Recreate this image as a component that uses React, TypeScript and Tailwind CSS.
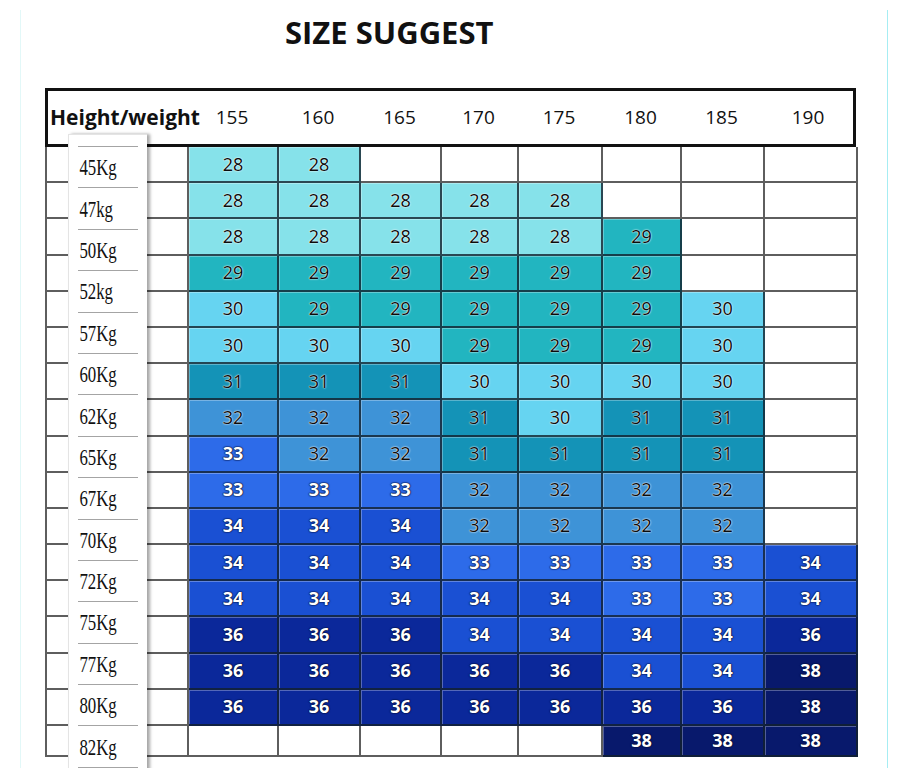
const heights = ["155", "160", "165", "170", "175", "180", "185", "190"];

const weights = ["45Kg", "47kg", "50Kg", "52kg", "57Kg", "60Kg", "62Kg", "65Kg", "67Kg", "70Kg", "72Kg", "75Kg", "77Kg", "80Kg", "82Kg"];

type Size = number | null;

const rows: Size[][] = [
  [28, 28, null, null, null, null, null, null],
  [28, 28, 28, 28, 28, null, null, null],
  [28, 28, 28, 28, 28, 29, null, null],
  [29, 29, 29, 29, 29, 29, null, null],
  [30, 29, 29, 29, 29, 29, 30, null],
  [30, 30, 30, 29, 29, 29, 30, null],
  [31, 31, 31, 30, 30, 30, 30, null],
  [32, 32, 32, 31, 30, 31, 31, null],
  [33, 32, 32, 31, 31, 31, 31, null],
  [33, 33, 33, 32, 32, 32, 32, null],
  [34, 34, 34, 32, 32, 32, 32, null],
  [34, 34, 34, 33, 33, 33, 33, 34],
  [34, 34, 34, 34, 34, 33, 33, 34],
  [36, 36, 36, 34, 34, 34, 34, 36],
  [36, 36, 36, 36, 36, 34, 34, 38],
  [36, 36, 36, 36, 36, 36, 36, 38],
  [null, null, null, null, null, 38, 38, 38],
];

// per size: background + whether text is light
const swatch: Record<number, { bg: string; light: boolean }> = {
  28: { bg: "bg-[#86e2ea]", light: false },
  29: { bg: "bg-[#22b5c0]", light: false },
  30: { bg: "bg-[#66d4f1]", light: false },
  31: { bg: "bg-[#1493b7]", light: false },
  32: { bg: "bg-[#3e93d7]", light: false },
  33: { bg: "bg-[#2d6be9]", light: true },
  34: { bg: "bg-[#1a50d3]", light: true },
  36: { bg: "bg-[#0b289a]", light: true },
  38: { bg: "bg-[#08196c]", light: true },
};

const SizeCell = ({ size }: { size: Size }) => {
  if (size === null) {
    return <div className="border-r-2 border-b-2 border-[#5e5e5e] bg-white" />;
  }
  const s = swatch[size];
  return (
    <div
      className={`flex items-center justify-center border-r-2 border-b-2 border-[#13202c]/80 ${s.bg} shadow-[inset_1px_1px_0_rgba(255,255,255,0.3)]`}
    >
      {s.light ? (
        <span className="text-[18px] font-bold text-white [text-shadow:0_0_2px_#00104a,0_0_1px_#000,0_0_1px_#000]">{size}</span>
      ) : (
        <span className="text-[18px] font-medium text-[#0c0c0c] [text-shadow:0_0_2px_#fff,0_0_1px_#fff]">{size}</span>
      )}
    </div>
  );
};

export default function App() {
  return (
    <div className="relative w-[905px] h-[768px] overflow-hidden bg-white font-['Open_Sans',sans-serif] text-[#111]">
      <div className="ml-[20px] w-[868px] h-[764px] border-l border-r border-b border-l-[#e2f8f8] border-r-[#a6edf3] border-b-[#b4f0f5]">
        {/* Title */}
        <h1 className="mt-[10px] pl-[264px] text-[31px] leading-[44px] font-bold">SIZE SUGGEST</h1>

        {/* Table */}
        <div className="ml-[24px] mt-[34px] w-[811px]">
          {/* Header */}
          <div className="grid h-[59px] grid-cols-[139px_90px_82px_81px_77px_84px_79px_83px_90px] items-center border-[3px] border-[#111]">
            <div className="pl-[2px] text-[21px] font-bold whitespace-nowrap">Height/weight</div>
            {heights.map((h) => (
              <div key={h} className="text-center text-[19px]">
                {h}
              </div>
            ))}
          </div>

          {/* Body */}
          <div className="grid grid-cols-[142px_90px_82px_81px_77px_84px_79px_83px_93px] grid-rows-[repeat(16,36.2px)_31px] border-l-2 border-[#5e5e5e]">
            {rows.map((row, r) => (
              <div key={r} className="contents">
                <div className="border-r-2 border-b-2 border-[#5e5e5e] bg-white" />
                {row.map((size, c) => (
                  <SizeCell key={c} size={size} />
                ))}
              </div>
            ))}
          </div>
        </div>
      </div>

      {/* Weight labels strip laid over the table */}
      <div className="absolute left-[68px] top-[134px] w-[79px] h-[660px] bg-white border-l border-t border-[#e4e4e4] pt-[11px] shadow-[3px_0_3px_rgba(0,0,0,0.35)]">
        {weights.map((w) => (
          <div key={w} className="mx-[9px] flex h-[41.4px] items-center border-t border-[#a4a4a4]">
            <span className="origin-left scale-x-[0.7] pl-[2px] font-['Liberation_Serif',serif] text-[24px] leading-none whitespace-nowrap">
              {w}
            </span>
          </div>
        ))}
        <div className="mx-[9px] border-t border-[#a4a4a4]" />
      </div>
    </div>
  );
}
